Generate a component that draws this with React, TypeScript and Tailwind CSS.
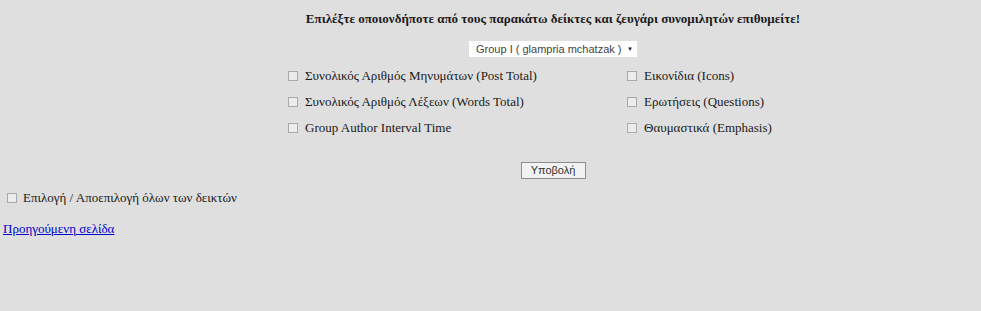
import React from 'react';

const LEFT = [
  'Συνολικός Αριθμός Μηνυμάτων (Post Total)',
  'Συνολικός Αριθμός Λέξεων (Words Total)',
  'Group Author Interval Time',
];

const RIGHT = ['Εικονίδια (Icons)', 'Ερωτήσεις (Questions)', 'Θαυμαστικά (Emphasis)'];

function Box() {
  return <span className="inline-block w-[10px] h-[10px] border border-[#a9a9a9] bg-[#ececec] shrink-0" />;
}

function Option({ label }: { label: string }) {
  return (
    <label className="flex items-center gap-[7px] h-[26px]">
      <Box />
      <span>{label}</span>
    </label>
  );
}

export default function App() {
  return (
    <div className="w-[981px] h-[311px] bg-[#dfdfdf] text-[#1a1a1a] text-[13px] font-['Liberation_Serif',serif] overflow-hidden">
      <div className="pl-[125px] flex flex-col items-center">
        <h1 className="mt-[11px] font-bold text-[13px] leading-[15px]">
          Επιλέξτε οποιονδήποτε από τους παρακάτω δείκτες και ζευγάρι συνομιλητών επιθυμείτε!
        </h1>
        <div className="mt-[15px] w-[168px] h-[16px] bg-white flex items-center pl-[7px] pr-[4px] font-['Liberation_Sans',sans-serif] text-[11px] text-[#444]">
          <span className="flex-1">Group I ( glampria mchatzak )</span>
          <span className="text-[6px] text-[#222]">▼</span>
        </div>
      </div>

      <div className="mt-[6px] ml-[288px] flex">
        <div className="w-[339px] flex flex-col">
          {LEFT.map((l) => (
            <Option key={l} label={l} />
          ))}
        </div>
        <div className="flex flex-col">
          {RIGHT.map((l) => (
            <Option key={l} label={l} />
          ))}
        </div>
      </div>

      <div className="pl-[125px] flex justify-center mt-[21px]">
        <button className="w-[65px] h-[17px] border border-[#8e8e8e] bg-[#f2f2f2] font-['Liberation_Sans',sans-serif] text-[11px] text-[#333] leading-none">
          Υποβολή
        </button>
      </div>

      <label className="mt-[12px] ml-[7px] flex items-center gap-[6px] h-[14px]">
        <Box />
        <span>Επιλογή / Αποεπιλογή όλων των δεικτών</span>
      </label>

      <a href="#" className="block ml-[3px] mt-[14px] text-[#0000cc] underline">
        Προηγούμενη σελίδα
      </a>
    </div>
  );
}
